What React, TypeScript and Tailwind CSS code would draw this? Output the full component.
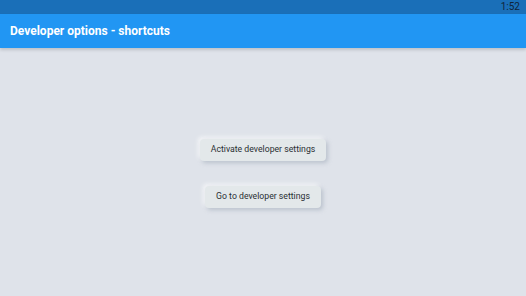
export default function App() {
  return (
    <div className="w-[526px] h-[296px] bg-[#dfe3ea] flex flex-col overflow-hidden" style={{ fontFamily: "Roboto, 'Noto Sans', sans-serif" }}>
      <div className="h-[14px] bg-[#1a6fb8] flex items-center justify-end pr-[6px]">
        <span className="text-[10px] leading-none text-[#10243a]">1:52</span>
      </div>
      <div className="h-[34px] bg-[#2196f3] flex items-center pl-[10px] shadow-[0_2px_3px_rgba(0,0,0,0.15)] z-10">
        <span className="text-[12px] font-bold text-white leading-none">Developer options - shortcuts</span>
      </div>
      <div className="flex-1 flex flex-col items-center pt-[91px] gap-[25px]">
        <button className="h-[22px] px-[11px] rounded-[4px] bg-[#e3e8ea] text-[8.7px] text-[#2a2f33] shadow-[2px_2px_4px_rgba(160,170,185,0.6),-2px_-2px_4px_rgba(255,255,255,0.7)]">
          Activate developer settings
        </button>
        <button className="h-[22px] px-[11px] rounded-[4px] bg-[#e3e8ea] text-[8.7px] text-[#2a2f33] shadow-[2px_2px_4px_rgba(160,170,185,0.6),-2px_-2px_4px_rgba(255,255,255,0.7)]">
          Go to developer settings
        </button>
      </div>
    </div>
  );
}
